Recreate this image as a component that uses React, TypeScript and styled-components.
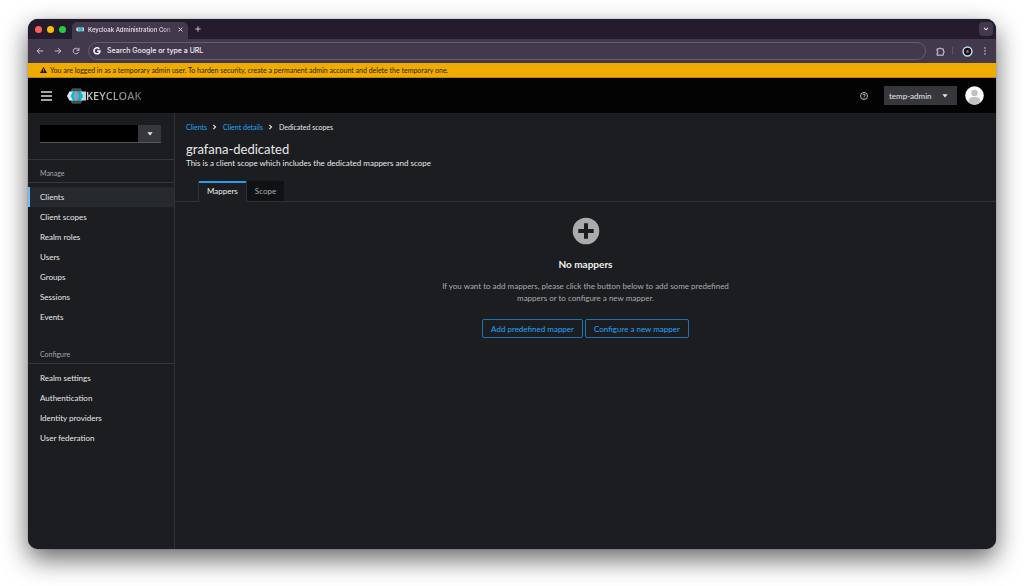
import React from "react";
import styled, { createGlobalStyle, css } from "styled-components";

const GlobalStyle = createGlobalStyle`
  * { box-sizing: border-box; }
  html, body { margin: 0; background: #fff; }
  body { font-family: Lato, "Liberation Sans", sans-serif; font-size: 8px; line-height: 12px; color: #e8e8e8; }
  button, input, select { font: inherit; margin: 0; }
  a { text-decoration: none; color: inherit; }
  ul, ol { list-style: none; margin: 0; padding: 0; }
  h1, h2, h3, p { margin: 0; font-weight: 400; }
`;

const Desktop = styled.div`
  display: flex;
  min-height: 100vh;
  padding: 19px 28px 37px;
  overflow: hidden;
`;

const Window = styled.div`
  flex: 1;
  min-width: 0;
  display: flex;
  flex-direction: column;
  overflow: hidden;
  border-radius: 10px;
  background: #1b1d21;
  box-shadow: 0 0 1px rgba(0, 0, 0, 0.7), 0 10px 26px rgba(0, 0, 0, 0.6);
`;

const TabStrip = styled.div`
  display: flex;
  align-items: center;
  height: 20px;
  padding: 0 3px 0 7px;
  background: #241b2d;
`;

const Lights = styled.div`
  display: flex;
  gap: 5px;
  width: 37px;
`;

const Light = styled.span<{ $color: string }>`
  width: 7px;
  height: 7px;
  border-radius: 50%;
  background: ${(p) => p.$color};
`;

const BrowserTab = styled.div`
  display: flex;
  align-items: center;
  align-self: flex-end;
  width: 116px;
  height: 17px;
  padding: 0 4px 2px 4px;
  border-radius: 5px 5px 0 0;
  background: #43394c;
  color: #e8e2ee;
`;

const TabTitle = styled.span`
  flex: 1;
  min-width: 0;
  margin-left: 4px;
  white-space: nowrap;
  font-family: Inter, sans-serif;
  font-size: 6px;
  font-weight: 500;
  mask-image: linear-gradient(90deg, #000 85%, transparent);
`;

const IconButton = styled.button<{ $size?: number }>`
  display: inline-flex;
  align-items: center;
  justify-content: center;
  flex: none;
  width: ${(p) => p.$size ?? 12}px;
  height: ${(p) => p.$size ?? 12}px;
  padding: 0;
  border: 0;
  border-radius: 4px;
  background: none;
  color: inherit;
`;

const TabSearch = styled(IconButton)`
  margin-left: auto;
  background: #43394c;
  color: #e8e2ee;
`;

const Toolbar = styled.div`
  display: flex;
  align-items: center;
  height: 24px;
  padding: 0 5px 0 6px;
  gap: 6px;
  background: #43394c;
  color: #d5cedb;
`;

const Omnibox = styled.label`
  flex: 1;
  display: flex;
  align-items: center;
  gap: 6px;
  height: 18px;
  padding: 0 4px;
  border: 1px solid #655c6e;
  border-radius: 9px;
  color: #fff;
`;

const OmniboxInput = styled.input`
  flex: 1;
  min-width: 0;
  padding: 0;
  border: 0;
  outline: 0;
  background: none;
  color: #fff;
  font-family: Inter, sans-serif;
  font-size: 7px;
  font-weight: 500;
  &::placeholder { color: #f1edf4; opacity: 1; }
`;

const ToolbarActions = styled.div`
  display: flex;
  align-items: center;
  gap: 6px;
  padding-left: 2px;
`;

const ToolbarRule = styled.span`
  width: 1px;
  height: 8px;
  margin-right: 2px;
  background: #5d5467;
`;

const Banner = styled.div`
  display: flex;
  align-items: center;
  gap: 3px;
  height: 15px;
  padding: 0 12px;
  border-bottom: 1px solid #b98412;
  background: #f0ab00;
  color: #2b2105;
  font-size: 7px;
`;

const Masthead = styled.header`
  display: flex;
  align-items: center;
  height: 35px;
  padding: 0 12px;
  background: #030303;
`;

const Brand = styled.a`
  display: flex;
  align-items: center;
  margin-left: 15px;
`;

const Wordmark = styled.span`
  font-family: "Open Sans", sans-serif;
  font-size: 11px;
  font-weight: 600;
  background: linear-gradient(90deg, #d8d8d8, #6c6c6c);
  background-clip: text;
  color: transparent;
`;

const MastheadTools = styled.div`
  display: flex;
  align-items: center;
  margin-left: auto;
`;

const UserToggle = styled.button`
  display: flex;
  align-items: center;
  justify-content: space-between;
  width: 73px;
  height: 19px;
  margin: 0 8px 0 14px;
  padding: 0 9px 0 5px;
  border: 0;
  background: #36373a;
  color: inherit;
`;

const Page = styled.div`
  flex: 1;
  display: flex;
`;

const Sidebar = styled.nav`
  flex: none;
  width: 147px;
  border-right: 1px solid #2f3135;
`;

const RealmArea = styled.div`
  padding: 12px 13px 16px 12px;
  border-bottom: 1px solid #35373b;
`;

const RealmPicker = styled.label`
  display: flex;
  align-items: center;
  height: 18px;
  border-bottom: 1px solid #55575b;
  background: #36373a;
`;

const RealmSelect = styled.select`
  flex: 1;
  align-self: stretch;
  appearance: none;
  border: 0;
  border-radius: 0;
  background: #000;
  color: #fff;
`;

const RealmCaret = styled.span`
  display: flex;
  justify-content: center;
  width: 23px;
`;

const NavSection = styled.section`
  margin-bottom: 14px;
`;

const NavHeading = styled.h2`
  padding: 7px 12px 3px;
  border-bottom: 1px solid #35373b;
  font-size: 7px;
  color: #a3a5a8;
`;

const NavList = styled.ul`
  padding-top: 4px;
`;

const NavLink = styled.a<{ $current?: boolean }>`
  display: block;
  padding: 4px 12px;
  ${(p) =>
    p.$current &&
    css`
      background: #26292d;
      box-shadow: inset 2px 0 0 #73bcf7;
    `}
`;

const Main = styled.main`
  flex: 1;
  min-width: 0;
`;

const PageHead = styled.div`
  padding: 8px 12px 12px 11px;
`;

const Crumbs = styled.ol`
  display: flex;
  align-items: center;
  gap: 6px;
  font-size: 7px;
`;

const Crumb = styled.li`
  display: flex;
  align-items: center;
  gap: 5px;
`;

const CrumbLink = styled.a`
  color: #1fa7f8;
`;

const Title = styled.h1`
  margin-top: 8px;
  font-size: 13px;
  line-height: 16px;
`;

const TabBar = styled.div`
  display: flex;
  padding-left: 23px;
  border-bottom: 1px solid #303236;
`;

const PageTab = styled.button<{ $active?: boolean }>`
  height: 20px;
  padding: 0 8px;
  border: 0;
  background: #0f1214;
  color: #aaabac;
  ${(p) =>
    p.$active &&
    css`
      height: 21px;
      margin-bottom: -1px;
      padding: 0 8px 1px;
      border: 1px solid #303236;
      border-width: 0 1px;
      background: #1b1d21;
      box-shadow: inset 0 2px 0 #2b9af3;
      color: #f0f0f0;
    `}
`;

const EmptyState = styled.section`
  display: flex;
  flex-direction: column;
  align-items: center;
  padding: 15px 16px;
  text-align: center;
`;

const EmptyTitle = styled.h2`
  margin-top: 11px;
  font-size: 10px;
  line-height: 16px;
  font-weight: 700;
  color: #f0f0f0;
`;

const EmptyText = styled.p`
  width: 304px;
  margin: 8px 0 15px;
  color: #aaabac;
`;

const Actions = styled.div`
  display: flex;
  gap: 2px;
`;

const OutlineButton = styled.button`
  height: 19px;
  padding: 0 8px;
  border: 1px solid #1b76b0;
  border-radius: 2px;
  background: none;
  color: #1fa7f8;
`;

const Caret = () => (
  <svg width="6" height="4" viewBox="0 0 6 4" fill="currentColor" aria-hidden="true">
    <path d="M0.3 0.3h5.4L3 3.5z" />
  </svg>
);

const Separator = () => (
  <svg width="5" height="6" viewBox="0 0 5 6" fill="none" stroke="#e0e0e0" strokeWidth="1.2" aria-hidden="true">
    <path d="M1.3 0.8 3.5 3 1.3 5.2" />
  </svg>
);

const KeycloakMark = ({ width }: { width: number }) => (
  <svg width={width} height={(width * 16) / 19} viewBox="0 0 19 16" aria-hidden="true">
    <path d="M5.2 0.3h8.6L18 8l-4.2 7.7H5.2L1 8z" fill="#4d4d4d" />
    <path d="M2.4 3.4H9v9.200H2.400L0 8z" fill="#e6e6e6" />
    <path d="M13 3.400h6v9.200h-6z" fill="#cfcfcf" />
    <path d="M6.200 3.200h3L6.700 8l2.500 4.800h-3L3.500 8z" fill="#00b8e3" />
    <path d="M9.200 3.200h1.200L12.900 8l-2.500 4.800H9.200L6.700 8z" fill="#8f9ea3" />
    <path d="M10.400 3.200h3L16.200 8l-2.800 4.800h-3L12.900 8z" fill="#00b8e3" />
  </svg>
);

const navigation = [
  {
    heading: "Manage",
    items: ["Clients", "Client scopes", "Realm roles", "Users", "Groups", "Sessions", "Events"],
  },
  {
    heading: "Configure",
    items: ["Realm settings", "Authentication", "Identity providers", "User federation"],
  },
];

export default function App() {
  return (
    <>
      <GlobalStyle />
      <Desktop>
        <Window>
          <TabStrip>
            <Lights>
              <Light $color="#ff5f57" />
              <Light $color="#febc05" />
              <Light $color="#28c840" />
            </Lights>
            <BrowserTab>
              <KeycloakMark width={8} />
              <TabTitle>Keycloak Administration Con</TabTitle>
              <IconButton $size={8} aria-label="Close tab">
                <svg width="5" height="5" viewBox="0 0 5 5" stroke="currentColor" strokeWidth="0.9">
                  <path d="M0.6 0.6 4.4 4.4M4.4 0.6 0.6 4.4" />
                </svg>
              </IconButton>
            </BrowserTab>
            <IconButton $size={20} aria-label="New tab">
              <svg width="6" height="6" viewBox="0 0 6 6" stroke="#d5cedb" strokeWidth="0.9">
                <path d="M3 0.3v5.4M0.3 3h5.4" />
              </svg>
            </IconButton>
            <TabSearch $size={14} aria-label="Search tabs">
              <svg width="6" height="4" viewBox="0 0 6 4" fill="none" stroke="currentColor" strokeWidth="1.1">
                <path d="M1 0.8 3 2.8 5 0.8" />
              </svg>
            </TabSearch>
          </TabStrip>

          <Toolbar>
            <IconButton aria-label="Back">
              <svg width="8" height="8" viewBox="0 0 8 8" fill="none" stroke="currentColor" strokeWidth="0.9">
                <path d="M7.2 4H1.2M3.9 1.2 1.1 4l2.8 2.8" />
              </svg>
            </IconButton>
            <IconButton aria-label="Forward">
              <svg width="8" height="8" viewBox="0 0 8 8" fill="none" stroke="currentColor" strokeWidth="0.9">
                <path d="M0.8 4h6M4.1 1.2 6.9 4 4.1 6.8" />
              </svg>
            </IconButton>
            <IconButton aria-label="Reload">
              <svg width="8" height="8" viewBox="0 0 8 8" fill="none" stroke="currentColor" strokeWidth="0.9">
                <path d="M6.6 5.1A2.8 2.8 0 1 1 6.3 2.4L7 3.3M7 0.8v2.5H4.6" />
              </svg>
            </IconButton>
            <Omnibox>
              <svg width="8" height="8" viewBox="0 0 8 8" fill="none" stroke="#fff" strokeWidth="1.5" aria-hidden="true">
                <path d="M6.3 1.9A3 3 0 1 0 7 4H4.1" />
              </svg>
              <OmniboxInput aria-label="Address and search bar" placeholder="Search Google or type a URL" />
            </Omnibox>
            <ToolbarActions>
              <IconButton aria-label="Extensions">
                <svg width="9" height="9" viewBox="0 0 9 9" fill="none" stroke="currentColor" strokeWidth="1">
                  <path d="M1 1.900H3.200V1.200h2v0.700H7.300V4h0.700v2H7.300v2.200H1V6.200h0.800v-2H1z" />
                </svg>
              </IconButton>
              <ToolbarRule />
              <IconButton aria-label="Profile">
                <svg width="11" height="11" viewBox="0 0 11 11">
                  <circle cx="5.5" cy="5.5" r="4.4" fill="#10131f" stroke="#b4dcf0" strokeWidth="1.5" />
                  <circle cx="5.5" cy="5.5" r="1.3" fill="#e0704a" />
                </svg>
              </IconButton>
              <IconButton aria-label="Browser menu">
                <svg width="2" height="8" viewBox="0 0 2 8" fill="currentColor">
                  <circle cx="1" cy="1" r="0.8" />
                  <circle cx="1" cy="4" r="0.8" />
                  <circle cx="1" cy="7" r="0.8" />
                </svg>
              </IconButton>
            </ToolbarActions>
          </Toolbar>

          <Banner>
            <svg width="7" height="6" viewBox="0 0 7 6" aria-hidden="true">
              <path d="M3.5 0 7 6H0z" fill="#151515" />
              <path d="M3.5 1.9v2M3.5 4.4v0.8" stroke="#f0ab00" strokeWidth="0.8" />
            </svg>
            <span>
              You are logged in as a temporary admin user. To harden security, create a permanent admin account and
              delete the temporary one.
            </span>
          </Banner>

          <Masthead>
            <IconButton aria-label="Global navigation">
              <svg width="11" height="10" viewBox="0 0 11 10" stroke="#a4a6a8" strokeWidth="2">
                <path d="M0 1h11M0 5h11M0 9h11" />
              </svg>
            </IconButton>
            <Brand href="#home" aria-label="Keycloak">
              <KeycloakMark width={19} />
              <Wordmark>KEYCLOAK</Wordmark>
            </Brand>
            <MastheadTools>
              <IconButton aria-label="Help">
                <svg width="8" height="8" viewBox="0 0 8 8" fill="none" stroke="currentColor" strokeWidth="0.8">
                  <circle cx="4" cy="4" r="3.5" />
                  <path d="M2.9 3.2a1.1 1.1 0 1 1 1.4 1.1L4 4.8M4 5.4v0.9" />
                </svg>
              </IconButton>
              <UserToggle aria-haspopup="menu">
                temp-admin
                <Caret />
              </UserToggle>
              <svg width="19" height="19" viewBox="0 0 19 19" role="img" aria-label="Avatar">
                <clipPath id="avatar"><circle cx="9.5" cy="9.5" r="9.3" /></clipPath>
                <g clipPath="url(#avatar)">
                  <path d="M0 0h19v19H0z" fill="#fff" />
                  <circle cx="9.5" cy="7" r="3.3" fill="#c2c2c2" />
                  <path d="M3.6 19v-4c0-2.6 1.8-3.9 5.9-3.9s5.9 1.3 5.9 3.9v4z" fill="#c2c2c2" />
                </g>
              </svg>
            </MastheadTools>
          </Masthead>

          <Page>
            <Sidebar aria-label="Global">
              <RealmArea>
                <RealmPicker>
                  <RealmSelect aria-label="Realm">
                    <option value="" />
                  </RealmSelect>
                  <RealmCaret>
                    <Caret />
                  </RealmCaret>
                </RealmPicker>
              </RealmArea>
              {navigation.map((section) => (
                <NavSection key={section.heading}>
                  <NavHeading>{section.heading}</NavHeading>
                  <NavList>
                    {section.items.map((item) => (
                      <li key={item}>
                        <NavLink href="#nav" $current={item === "Clients"}>
                          {item}
                        </NavLink>
                      </li>
                    ))}
                  </NavList>
                </NavSection>
              ))}
            </Sidebar>
            <Main>
              <PageHead>
                <Crumbs aria-label="Breadcrumb">
                  <Crumb>
                    <CrumbLink href="#clients">Clients</CrumbLink>
                    <Separator />
                  </Crumb>
                  <Crumb>
                    <CrumbLink href="#details">Client details</CrumbLink>
                    <Separator />
                  </Crumb>
                  <Crumb aria-current="page">Dedicated scopes</Crumb>
                </Crumbs>
                <Title>grafana-dedicated</Title>
                <p>This is a client scope which includes the dedicated mappers and scope</p>
              </PageHead>
              <TabBar role="tablist">
                <PageTab role="tab" aria-selected="true" $active>
                  Mappers
                </PageTab>
                <PageTab role="tab" aria-selected="false">
                  Scope
                </PageTab>
              </TabBar>
              <EmptyState>
                <svg width="28" height="28" viewBox="0 0 28 28" aria-hidden="true">
                  <circle cx="14" cy="14" r="13.3" fill="#aaabac" />
                  <path d="M12 6.3h4V12h5.7v4H16v5.7h-4V16H6.3v-4H12z" fill="#1b1d21" />
                </svg>
                <EmptyTitle>No mappers</EmptyTitle>
                <EmptyText>
                  If you want to add mappers, please click the button below to add some predefined mappers or to
                  configure a new mapper.
                </EmptyText>
                <Actions>
                  <OutlineButton>Add predefined mapper</OutlineButton>
                  <OutlineButton>Configure a new mapper</OutlineButton>
                </Actions>
              </EmptyState>
            </Main>
          </Page>
        </Window>
      </Desktop>
    </>
  );
}
